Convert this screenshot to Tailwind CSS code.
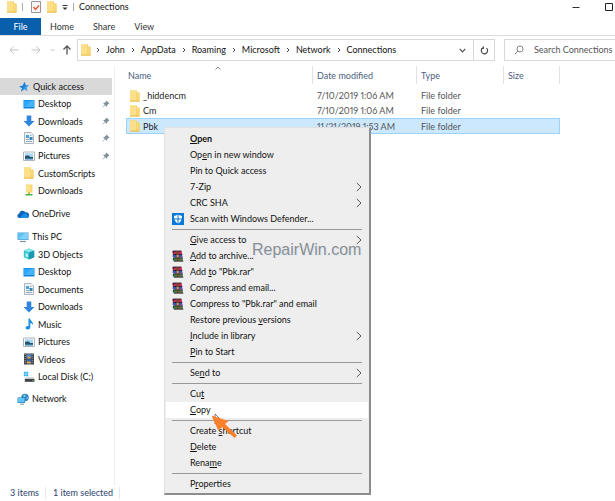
<!DOCTYPE html>
<html lang="en">
<head>
<meta charset="utf-8">
<title>Connections</title>
<script src="https://cdn.jsdelivr.net/npm/@tailwindcss/browser@4"></script>
</head>
<body class="bg-white font-[Lato,'Open_Sans',sans-serif] text-[9px] leading-[16px] text-[#111]">
<svg class="hidden" aria-hidden="true">
  <symbol id="folder" viewBox="0 0 12 12"><path d="M1 .5h7v2h2.500v9H1z" fill="#f0c850"/><path d="M1 .5h6.500v10.500H1z" fill="#fbdf8a"/><path d="M7.500 3h3v8h-3z" fill="#f9d774"/><path d="M1 11h9.500" stroke="#e8bf4c"/></symbol>
  <symbol id="star" viewBox="0 0 12 12"><path d="M6.500 1l1.300 3.200 3.400.1-2.600 2.300.8 3.500-3-1.800L3 10.800l1.100-3.600L1.200 5.200l3.500-.5z" fill="#2f9be8"/><path d="M6.500 1l1.300 3.200-3 4.300L3 10.800l1.100-3.600L1.200 5.200l3.500-.5z" fill="#1e7fd0"/></symbol>
  <symbol id="desktop" viewBox="0 0 12 12"><path d="M.5 2h11v8.500H.5z" fill="#1384dc"/><path d="M1 2.500h10v6.500H1z" fill="#2ba5f7"/><path d="M1 9l8-6.500h2V9z" fill="#45b4fb"/></symbol>
  <symbol id="download" viewBox="0 0 12 12"><path d="M3.700.5h4.600V6h3.200L6 11.500.500 6h3.200z" fill="#2f86dc"/></symbol>
  <symbol id="document" viewBox="0 0 12 12"><path d="M1.500.5H8L10.500 3v8.500h-9z" fill="#eef3f6" stroke="#98a3ab" stroke-width=".8"/><path d="M3 3h3v3H3z" fill="#4aa5d8"/><path d="M6.500 5h3v3h-3z" fill="#3b88b8"/><path d="M3 7.500h3M3 9.500h6M7 3.500h1.500" stroke="#7d98a8" stroke-width=".8"/></symbol>
  <symbol id="picture" viewBox="0 0 12 12"><path d="M.5 2h11v8.500H.5z" fill="#fff" stroke="#a5acb1" stroke-width=".9"/><path d="M2 3.300h8v6H2z" fill="#a8d8f4"/><path d="M2 6l3-.8 2.500 1.800L10 7v2.300H2z" fill="#27516c"/><path d="M2 8.300h8v1H2z" fill="#3d89b5"/></symbol>
  <symbol id="netfolder" viewBox="0 0 12 12"><path d="M3 .5h6.500v8H3z" fill="#f8d86f"/><path d="M3 .5h4v7H3z" fill="#fce393"/><path d="M6 8v2.500" stroke="#e0b94a" stroke-width="2"/><path d="M2.500 10.800h7" stroke="#35b23c" stroke-width="1.400"/></symbol>
  <symbol id="onedrive" viewBox="0 0 12 12"><path d="M2.200 10A2.200 2.200 0 0 1 2 5.700 3.600 3.600 0 0 1 8.600 4.500 2.800 2.800 0 0 1 10 10z" fill="#0a64b8"/><path d="M2.500 10l3.800-4.200 2.500-.3A2.700 2.700 0 0 1 10 10z" fill="#1a8ee6"/></symbol>
  <symbol id="pc" viewBox="0 0 12 12"><path d="M.5 1.500h11v7.500H.5z" fill="#4d9bc9"/><path d="M1 2h10v6.300H1z" fill="#5cc0f5"/><path d="M1 8.300L8 2h3v6.300z" fill="#7fd0fa"/><path d="M3 10.500h6" stroke="#7c929e" stroke-width="1.200"/></symbol>
  <symbol id="cube" viewBox="0 0 12 12"><path d="M6 .5l5.200 2v6.800L6 11.500.800 9.300V2.500z" fill="#35c3d0"/><path d="M6 .5l5.200 2L6 4.500.800 2.500z" fill="#8be6ec"/><path d="M6 4.500l5.200-2v6.800L6 11.500z" fill="#1d98ac"/><path d="M2.500 5L5 6v3.500l-2.500-1z" fill="#baf3f5"/></symbol>
  <symbol id="music" viewBox="0 0 12 12"><path d="M5.500.5H7c.3 2.500 3.600 3 2.800 6.500C9.400 5.800 8.200 5.200 7.300 5v4.200c0 2.900-4.800 3-4.800.9S4.800 7.800 5.500 8z" fill="#1b8fe3"/></symbol>
  <symbol id="video" viewBox="0 0 12 12"><path d="M1 .5h10v11H1z" fill="#3f4347"/><path d="M3.500 1.200h5v4.300h-5z" fill="#5f86c4"/><path d="M3.500 6.300h5v4.300h-5z" fill="#3c62a8"/><path d="M4.500 3l3 1.500v1H4.500zM4 8l4 1v1.600H4z" fill="#d8a03b"/><path d="M2.200 1v10M9.800 1v10" stroke="#c9cdd0" stroke-width=".7" stroke-dasharray="1 1"/></symbol>
  <symbol id="disk" viewBox="0 0 12 12"><path d="M.8.8h2v2h-2zM3.200.8h2v2h-2zM.8 3.200h2v2h-2zM3.200 3.200h2v2h-2z" fill="#28b3ee"/><path d="M2 8l1-1.700h7.500l1 1.700z" fill="#c8ccce"/><path d="M1.800 8H11.500v2.800H1.800z" fill="#3c4145"/><path d="M9.500 9.500h1" stroke="#6bdc6b"/></symbol>
  <symbol id="network" viewBox="0 0 12 12"><circle cx="8" cy="4.500" r="3.800" fill="#2f86c4"/><path d="M6 2.500l2-1 1 1.500-2 1.500zM9 5l2-1-.5 2.500z" fill="#8ac9ea"/><path d="M.5 4.500h7.500v5.500H.5z" fill="#2b7fb8"/><path d="M1 5h6.500v4.300H1z" fill="#62c6f8"/><path d="M3 11.200h4" stroke="#7c929e"/></symbol>
  <symbol id="pin" viewBox="0 0 8 8"><path d="M4.500.5l3 3-1 .4-1.300 1.300L5 7 3.200 5.300.700 7.500l-.200-.2L2.700 4.800 1 3l1.800-.2L4.100 1.500z" fill="#81919c"/></symbol>
  <symbol id="sep" viewBox="0 0 4 6"><path d="M1 1l2 2-2 2" fill="none" stroke="#444" stroke-width="1"/></symbol>
  <symbol id="more" viewBox="0 0 6 10"><path d="M.8 1l4.200 4-4.200 4" fill="none" stroke="#555" stroke-width="1"/></symbol>
  <symbol id="rar" viewBox="0 0 12 12"><path d="M1 1h8.500l.5 3.500H2L1 3.500z" fill="#b82a5c"/><path d="M1.500 4.500H10l.5 3H2z" fill="#3150c0"/><path d="M1.500 8H10.500l.5 3H2z" fill="#2b8a48"/><path d="M.8 1h8.700M1 4.500h9.300M1 7.900h9.800M1.800 11.200h9.500M1 1v2.500M1.200 4.500V7M1.400 8v2.500" stroke="#221018" stroke-width=".8"/><path d="M4.600 1h2v10h-2z" fill="#7a4630"/><path d="M4.800 5h1.600v2H4.800z" fill="#d8b64a"/><path d="M7.500 2.800h2.800M7.500 6.200h3M7.500 9.600h3.300" stroke="#d8405c" stroke-width=".6"/></symbol>
  <symbol id="defender" viewBox="0 0 12 12"><path d="M0 0h12v12H0z" fill="#0a78d6"/><path d="M6 1.500c1.500 1 2.800 1.200 4 1.200 0 4-1 6.300-4 8-3-1.700-4-4-4-8 1.200 0 2.500-.2 4-1.200z" fill="#fff"/><path d="M6 1v10M1.500 6h9" stroke="#0a78d6" stroke-width="1"/></symbol>
</svg>

<div class="relative flex min-h-screen flex-col overflow-hidden">
  <header>
    <div class="flex h-[18px] items-center pb-1 pl-[6px]">
      <svg class="size-3"><use href="#folder"/></svg>
      <span class="ml-[4px] h-2 w-px bg-[#aaa]"></span>
      <button aria-label="Properties" class="ml-[7px]"><svg class="size-3" viewBox="0 0 12 12"><path d="M1.500.5h9v11h-9z" fill="#f7f7f7" stroke="#8b8b8b" stroke-width=".9"/><path d="M3.500 6l2 2.500 3.500-4" fill="none" stroke="#e0562b" stroke-width="1.400"/></svg></button>
      <button aria-label="New folder" class="ml-[4px]"><svg class="size-3"><use href="#folder"/></svg></button>
      <button aria-label="Customize toolbar" class="ml-[4px]"><svg class="h-2 w-[6px]" viewBox="0 0 6 8"><path d="M.5 2.500h5" stroke="#333"/><path d="M.5 4.500h5L3 7z" fill="#333"/></svg></button>
      <span class="ml-[5px] h-2 w-px bg-[#aaa]"></span>
      <h1 class="ml-[5px]">Connections</h1>
      <button aria-label="Minimize" class="mr-[25px] ml-auto"><svg class="size-2" viewBox="0 0 8 8"><path d="M.5 4.500h7" stroke="#333"/></svg></button>
      <button aria-label="Maximize" class="mr-[2px]"><svg class="size-2" viewBox="0 0 8 8"><path d="M.5.5h7v7h-7z" fill="none" stroke="#222"/></svg></button>
    </div>
    <nav class="flex h-[18px] items-center border-b border-[#dcdcdc] text-[#333]">
      <button class="h-[17px] w-[41px] bg-[#0a5fad] text-white">File</button>
      <button class="ml-[9px]">Home</button>
      <button class="ml-[19px]">Share</button>
      <button class="ml-[19px]">View</button>
    </nav>
    <div class="flex h-[30px] items-center pt-[3px] pb-[5px]">
      <button aria-label="Back" class="ml-[9px]"><svg class="size-[10px]" viewBox="0 0 10 10"><path d="M9.500 5H1M4.500 1.500L1 5l3.500 3.500" fill="none" stroke="#c4c4c4"/></svg></button>
      <button aria-label="Forward" class="ml-[12px]"><svg class="size-[10px]" viewBox="0 0 10 10"><path d="M.5 5H9M5.500 1.500L9 5 5.500 8.500" fill="none" stroke="#c4c4c4"/></svg></button>
      <button aria-label="Recent locations" class="ml-[9px]"><svg class="h-1 w-[5px]" viewBox="0 0 5 4"><path d="M.5 1l2 2 2-2" fill="none" stroke="#c4c4c4"/></svg></button>
      <button aria-label="Up" class="ml-[7px]"><svg class="size-[10px]" viewBox="0 0 10 10"><path d="M5 9.500V1M1.500 4.500L5 1l3.500 3.500" fill="none" stroke="#555" stroke-width="1.300"/></svg></button>
      <div class="ml-[5px] flex h-[22px] flex-1 items-center border border-[#d9d9d9] pl-[2px]">
        <svg class="size-3"><use href="#folder"/></svg>
        <svg class="ml-[4px] h-[6px] w-1"><use href="#sep"/></svg>
        <button class="ml-[6px]">John</button>
        <svg class="ml-[6px] h-[6px] w-1"><use href="#sep"/></svg>
        <button class="ml-[6px]">AppData</button>
        <svg class="ml-[6px] h-[6px] w-1"><use href="#sep"/></svg>
        <button class="ml-[6px]">Roaming</button>
        <svg class="ml-[6px] h-[6px] w-1"><use href="#sep"/></svg>
        <button class="ml-[6px]">Microsoft</button>
        <svg class="ml-[6px] h-[6px] w-1"><use href="#sep"/></svg>
        <button class="ml-[6px]">Network</button>
        <svg class="ml-[6px] h-[6px] w-1"><use href="#sep"/></svg>
        <button class="ml-[6px]">Connections</button>
        <button aria-label="Previous locations" class="mr-[7px] ml-auto"><svg class="h-[5px] w-[7px]" viewBox="0 0 7 5"><path d="M.8 1l2.700 2.800L6.200 1" fill="none" stroke="#555" stroke-width="1.200"/></svg></button>
        <button aria-label="Refresh" class="flex h-full w-[21px] items-center justify-center border-l border-[#d9d9d9]"><svg class="size-[9px]" viewBox="0 0 9 9"><path d="M3 1.800A3.200 3.200 0 1 0 6.500 2.200M3.300.3v2.200H1.200" fill="none" stroke="#444" stroke-width="1.100"/></svg></button>
      </div>
      <label class="ml-[9px] flex h-[22px] w-[111px] items-center border-y border-l border-[#d9d9d9] pl-[9px]">
        <svg class="size-[10px] shrink-0" viewBox="0 0 10 10"><circle cx="6" cy="4" r="3" fill="none" stroke="#777" stroke-width=".9"/><path d="M3.800 6.200L.8 9.200" stroke="#777"/></svg>
        <input type="text" aria-label="Search" placeholder="Search Connections" class="ml-[10px] w-full min-w-0 outline-none placeholder:text-[#555]">
      </label>
    </div>
  </header>

  <div class="flex flex-1">
    <nav class="w-[115px] shrink-0 border-r border-[#f0f0f0] pt-[12px] leading-[17px]">
      <div class="flex h-[121px] flex-col justify-between">
        <a href="#" class="mr-[2px] flex h-[17px] items-center gap-[3px] bg-[#d9d9d9] pl-[18px]"><svg class="size-3"><use href="#star"/></svg>Quick access</a>
        <a href="#" class="flex h-[17px] items-center gap-[3px] pr-[4px] pl-[23px]"><svg class="size-3"><use href="#desktop"/></svg>Desktop<svg class="ml-auto size-2"><use href="#pin"/></svg></a>
        <a href="#" class="flex h-[17px] items-center gap-[3px] pr-[4px] pl-[23px]"><svg class="size-3"><use href="#download"/></svg>Downloads<svg class="ml-auto size-2"><use href="#pin"/></svg></a>
        <a href="#" class="flex h-[17px] items-center gap-[3px] pr-[4px] pl-[23px]"><svg class="size-3"><use href="#document"/></svg>Documents<svg class="ml-auto size-2"><use href="#pin"/></svg></a>
        <a href="#" class="flex h-[17px] items-center gap-[3px] pr-[4px] pl-[23px]"><svg class="size-3"><use href="#picture"/></svg>Pictures<svg class="ml-auto size-2"><use href="#pin"/></svg></a>
        <a href="#" class="flex h-[17px] items-center gap-[3px] pl-[23px]"><svg class="size-3"><use href="#folder"/></svg>CustomScripts</a>
        <a href="#" class="flex h-[17px] items-center gap-[3px] pl-[23px]"><svg class="size-3"><use href="#netfolder"/></svg>Downloads</a>
      </div>
      <a href="#" class="mt-[6px] flex h-[17px] items-center gap-[3px] pl-[17px]"><svg class="size-3"><use href="#onedrive"/></svg>OneDrive</a>
      <div class="mt-[6px] flex h-[157px] flex-col justify-between">
        <a href="#" class="flex h-[17px] items-center gap-[3px] pl-[17px]"><svg class="size-3"><use href="#pc"/></svg>This PC</a>
        <a href="#" class="flex h-[17px] items-center gap-[3px] pl-[23px]"><svg class="size-3"><use href="#cube"/></svg>3D Objects</a>
        <a href="#" class="flex h-[17px] items-center gap-[3px] pl-[23px]"><svg class="size-3"><use href="#desktop"/></svg>Desktop</a>
        <a href="#" class="flex h-[17px] items-center gap-[3px] pl-[23px]"><svg class="size-3"><use href="#document"/></svg>Documents</a>
        <a href="#" class="flex h-[17px] items-center gap-[3px] pl-[23px]"><svg class="size-3"><use href="#download"/></svg>Downloads</a>
        <a href="#" class="flex h-[17px] items-center gap-[3px] pl-[23px]"><svg class="size-3"><use href="#music"/></svg>Music</a>
        <a href="#" class="flex h-[17px] items-center gap-[3px] pl-[23px]"><svg class="size-3"><use href="#picture"/></svg>Pictures</a>
        <a href="#" class="flex h-[17px] items-center gap-[3px] pl-[23px]"><svg class="size-3"><use href="#video"/></svg>Videos</a>
        <a href="#" class="flex h-[17px] items-center gap-[3px] pl-[23px]"><svg class="size-3"><use href="#disk"/></svg>Local Disk (C:)</a>
      </div>
      <a href="#" class="mt-[5px] flex h-[17px] items-center gap-[3px] pl-[17px]"><svg class="size-3"><use href="#network"/></svg>Network</a>
    </nav>

    <main class="relative flex-1 pl-[11px]">
      <table class="w-[434px] table-fixed border-separate border-spacing-0 text-left leading-[13px] text-[#555] proportional-nums">
        <colgroup><col class="w-[187px]"><col class="w-[104px]"><col class="w-[87px]"><col class="w-[56px]"></colgroup>
        <thead class="text-[#4b607f]">
          <tr class="h-[18px]">
            <th class="border-r border-[#e2e2e2] p-0 pl-[2px] font-normal">Name</th>
            <th class="border-r border-[#e2e2e2] p-0 pl-[4px] font-normal">Date modified</th>
            <th class="border-r border-[#e2e2e2] p-0 pl-[4px] font-normal">Type</th>
            <th class="border-r border-[#e2e2e2] p-0 pl-[4px] font-normal">Size</th>
          </tr>
        </thead>
        <tbody>
          <tr class="h-1"><td colspan="4" class="p-0 leading-[4px]"></td></tr>
          <tr class="h-[15px]"><td class="p-0 pl-[3px]"><span class="flex items-center gap-[2px] text-[#222]"><svg class="size-3"><use href="#folder"/></svg>_hiddencm</span></td><td class="p-0 pl-[4px]">7/10/2019 1:06 AM</td><td class="p-0 pl-[4px]">File folder</td><td class="p-0"></td></tr>
          <tr class="h-[15px]"><td class="p-0 pl-[3px]"><span class="flex items-center gap-[2px] text-[#222]"><svg class="size-3"><use href="#folder"/></svg>Cm</span></td><td class="p-0 pl-[4px]">7/10/2019 1:06 AM</td><td class="p-0 pl-[4px]">File folder</td><td class="p-0"></td></tr>
          <tr class="h-[16px] bg-[#cce8ff] outline outline-1 -outline-offset-1 outline-[#99d1ff]"><td class="p-0 pl-[3px]"><span class="flex items-center gap-[2px] text-[#222]"><svg class="size-3"><use href="#folder"/></svg>Pbk</span></td><td class="p-0 pl-[4px]">11/21/2019 1:53 AM</td><td class="p-0 pl-[4px]">File folder</td><td class="p-0"></td></tr>
        </tbody>
      </table>
      <svg class="absolute top-0 left-[100px] h-1 w-[6px]" viewBox="0 0 6 4"><path d="M.5 3.500L3 1l2.500 2.500" fill="none" stroke="#777" stroke-width=".9"/></svg>
    </main>
  </div>

  <footer class="flex h-[16px] items-center pl-[10px] text-[#2c4270]">
    <span>3 items</span><span class="ml-[6px] h-3 w-px bg-[#e8e8e8]"></span><span class="ml-[7px]">1 item selected</span><span class="ml-[6px] h-3 w-px bg-[#e8e8e8]"></span>
  </footer>

  <div role="menu" class="absolute top-[127px] left-[164px] flex w-[207px] flex-col border border-r-2 border-b-2 border-[#e0e0e0] border-r-[#8c8c8c] border-b-[#8c8c8c] bg-[#eee] px-px pt-[3px] pb-px text-[#111]">
    <button role="menuitem" class="h-4 pl-[24px] text-left font-bold"><u>O</u>pen</button>
    <button role="menuitem" class="h-4 pl-[24px] text-left">Op<u>e</u>n in new window</button>
    <button role="menuitem" class="h-4 pl-[24px] text-left">Pin to Quick access</button>
    <button role="menuitem" class="flex h-4 items-center justify-between pr-[6px] pl-[24px]">7-Zip<svg class="h-[10px] w-[6px]"><use href="#more"/></svg></button>
    <button role="menuitem" class="flex h-4 items-center justify-between pr-[6px] pl-[24px]">CRC SHA<svg class="h-[10px] w-[6px]"><use href="#more"/></svg></button>
    <button role="menuitem" class="flex h-4 items-center gap-[6px] pl-[6px]"><svg class="size-3"><use href="#defender"/></svg>Scan with Windows Defender...</button>
    <hr class="mx-[6px] my-[2px] border-[#999]">
    <button role="menuitem" class="flex h-4 items-center justify-between pr-[6px] pl-[24px]"><span><u>G</u>ive access to</span><svg class="h-[10px] w-[6px]"><use href="#more"/></svg></button>
    <button role="menuitem" class="flex h-4 items-center gap-[6px] pl-[6px]"><svg class="size-3"><use href="#rar"/></svg><span><u>A</u>dd to archive...</span></button>
    <button role="menuitem" class="flex h-4 items-center gap-[6px] pl-[6px]"><svg class="size-3"><use href="#rar"/></svg><span>Add <u>t</u>o "Pbk.rar"</span></button>
    <button role="menuitem" class="flex h-4 items-center gap-[6px] pl-[6px]"><svg class="size-3"><use href="#rar"/></svg>Compress and email...</button>
    <button role="menuitem" class="flex h-4 items-center gap-[6px] pl-[6px]"><svg class="size-3"><use href="#rar"/></svg>Compress to "Pbk.rar" and email</button>
    <button role="menuitem" class="h-4 pl-[24px] text-left">Restore previous <u>v</u>ersions</button>
    <button role="menuitem" class="flex h-4 items-center justify-between pr-[6px] pl-[24px]"><span><u>I</u>nclude in library</span><svg class="h-[10px] w-[6px]"><use href="#more"/></svg></button>
    <button role="menuitem" class="h-4 pl-[24px] text-left"><u>P</u>in to Start</button>
    <hr class="mx-[6px] my-[2px] border-[#999]">
    <button role="menuitem" class="flex h-4 items-center justify-between pr-[6px] pl-[24px]"><span>Se<u>n</u>d to</span><svg class="h-[10px] w-[6px]"><use href="#more"/></svg></button>
    <hr class="mx-[6px] my-[2px] border-[#999]">
    <button role="menuitem" class="h-4 pl-[24px] text-left">Cu<u>t</u></button>
    <button role="menuitem" class="h-4 bg-white pl-[24px] text-left"><u>C</u>opy</button>
    <hr class="mx-[6px] my-[2px] border-[#999]">
    <button role="menuitem" class="h-4 pl-[24px] text-left">Create <u>s</u>hortcut</button>
    <button role="menuitem" class="h-4 pl-[24px] text-left"><u>D</u>elete</button>
    <button role="menuitem" class="h-4 pl-[24px] text-left">Rena<u>m</u>e</button>
    <hr class="mx-[6px] my-[2px] border-[#999]">
    <button role="menuitem" class="h-4 pl-[24px] text-left">P<u>r</u>operties</button>
  </div>

  <span class="absolute top-[240px] left-[252px] font-['Liberation_Sans',Arial,sans-serif] text-[16px] leading-[20px] text-[#8d8d8d] [text-shadow:1px_1px_0_#dcecfb]">RepairWin.com</span>
  <svg class="absolute top-[412px] left-[211px] h-[27px] w-[27px]" viewBox="0 0 27 27"><path d="M4 2v10l2.500-2 1.500 3 1.500-1-1.500-3h3z" fill="#fff" stroke="#555" stroke-width=".8"/><path d="M.5 3.500L17.500 9l-3.500 3 12 11.500-2.500 2.500L11 15l-3.500 4z" fill="#f9802a"/></svg>
</div>
</body>
</html>
